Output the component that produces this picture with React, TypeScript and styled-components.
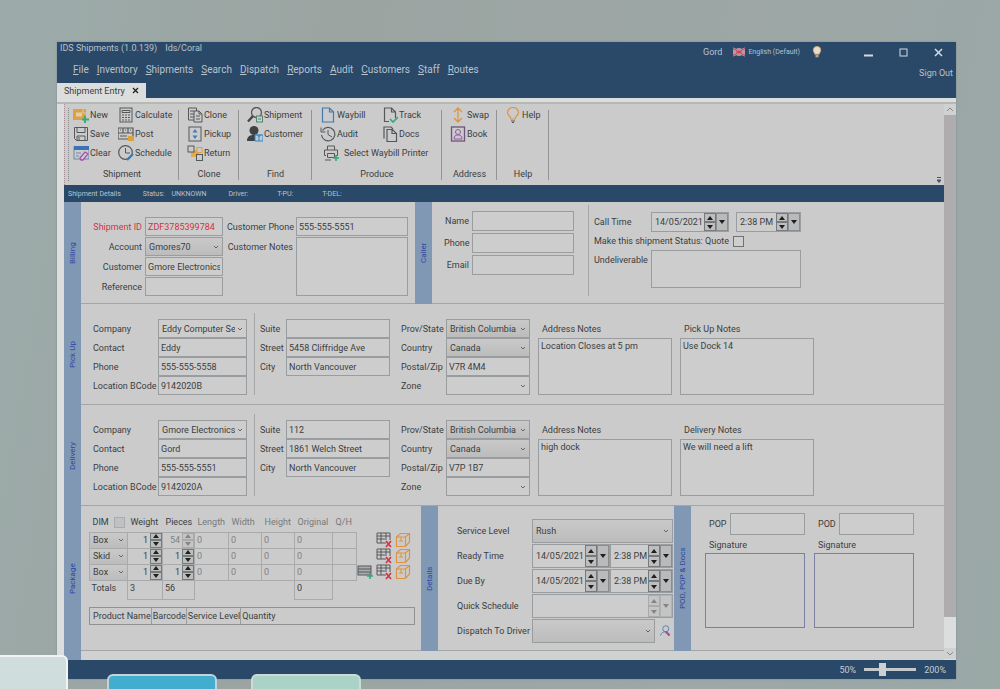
import React from "react";
import styled, { createGlobalStyle, css } from "styled-components";

const c = {
  navy: "#2a4868",
  grey: "#cbcbcb",
  light: "#dcdddd",
  line: "#a3a5a6",
  border: "#9a9d9f",
  strip: "#8198b4",
  stripText: "#2c46a0",
  text: "#3b3d40",
  red: "#d3333f",
};

const Global = createGlobalStyle`
  * { box-sizing: border-box; }
  body {
    margin: 0;
    font-family: Roboto, "Open Sans", sans-serif;
    font-size: 9px;
    line-height: 12px;
    color: ${c.text};
  }
  button, input, select, textarea { font: inherit; color: inherit; margin: 0; }
`;

const Page = styled.div`
  position: relative;
  min-height: 100vh;
  overflow: hidden;
  padding: 42px 44px 10px 57px;
  background: linear-gradient(100deg, #9cabaa 0%, #9ba4a1 30%, #9da7a6 70%, #9aa8a6 100%);
`;

const AppWindow = styled.div`
  background: ${c.light};
  box-shadow: 0 0 2px #7d8b8e;
`;

/* ---------- Title bar, menu and tabs ---------- */

const Header = styled.header`
  background: ${c.navy};
  color: #b9c3cd;
`;

const TitleBar = styled.div`
  display: flex;
  justify-content: space-between;
  height: 18px;
  padding-left: 3px;
`;

const Title = styled.h1`
  display: flex;
  gap: 8px;
  margin: 0;
  font-size: 9px;
  font-weight: 400;
`;

const TitleTools = styled.div`
  display: flex;
  align-items: center;
  gap: 11px;
  padding-top: 2px;
`;

const Language = styled.button`
  display: flex;
  align-items: center;
  gap: 3px;
  padding: 0;
  border: 0;
  background: none;
  font-size: 7px;
`;

const WindowButtons = styled.div`
  display: flex;
  margin-left: 17px;
`;

const WindowButton = styled.button`
  display: grid;
  place-items: center;
  width: 35px;
  height: 16px;
  padding: 0;
  border: 0;
  background: none;
`;

const MenuBar = styled.nav`
  display: flex;
  justify-content: space-between;
  align-items: center;
  height: 20px;
  padding: 0 3px 0 16px;
`;

const MenuItems = styled.div`
  display: flex;
  gap: 8px;
  font-size: 10px;
`;

const MenuLink = styled.a`
  color: inherit;
  text-decoration: none;
`;

const SignOut = styled(MenuLink)`
  padding-top: 6px;
`;

const Tabs = styled.div`
  display: flex;
  align-items: flex-end;
  height: 18px;
`;

const Tab = styled.div`
  display: flex;
  align-items: center;
  gap: 7px;
  height: 15px;
  padding: 0 7px;
  background: ${c.light};
  color: ${c.text};
`;

const CloseTab = styled.button`
  display: flex;
  padding: 0;
  border: 0;
  background: none;
`;

/* ---------- Body frame ---------- */

const Body = styled.div`
  display: flex;
  margin-top: 4px;
  border-top: 2px solid #b5b8b5;
`;

const Main = styled.main`
  flex: 1;
  min-width: 0;
  padding-left: 7px;
`;

const MainFoot = styled.div`
  height: 9px;
  border-left: 17px solid ${c.strip};
  background: #d0d1d1;
`;

const ScrollBar = styled.div`
  display: flex;
  flex-direction: column;
  width: 12px;
  padding-bottom: 1px;
`;

const ScrollButton = styled.button`
  display: grid;
  place-items: center;
  height: 11px;
  padding: 0;
  border: 0;
  background: #d0d1d1;
`;

const Thumb = styled.div`
  flex: 1;
  margin-bottom: 31px;
  background: #aeacad;
`;

/* ---------- Ribbon ---------- */

const Ribbon = styled.div`
  display: flex;
  height: 81px;
  padding: 1px 0 0 4px;
  background: ${c.grey};
  border-left: 1px dotted #a58f95;
`;

const Grip = styled.div`
  width: 2px;
  margin: 3px 0 4px -1px;
  border-left: 1px dotted #85888a;
`;

const RibbonGroup = styled.section<{ $w: number; $tight?: boolean }>`
  display: flex;
  flex-direction: column;
  justify-content: space-between;
  width: ${(p) => p.$w}px;
  height: 75px;
  padding-left: ${(p) => (p.$tight ? 3 : 8)}px;
  background: linear-gradient(#929496, #929496) right 5px / 1px 70px no-repeat;
`;

const Commands = styled.div<{ $cols?: string }>`
  display: grid;
  grid-template-columns: ${(p) => p.$cols || "auto"};
  grid-auto-rows: 19px;
  justify-content: start;
`;

const Command = styled.button<{ $wide?: boolean }>`
  display: flex;
  align-items: center;
  gap: 1px;
  padding: 0;
  border: 0;
  background: none;
  white-space: nowrap;
  ${(p) => p.$wide && css`grid-column: 1 / -1; padding-left: 3px; gap: 5px;`}
`;

const GroupName = styled.h2`
  margin: 0 8px 0 0;
  font-size: 9px;
  font-weight: 400;
  text-align: center;
`;

const RibbonEnd = styled.div`
  display: flex;
  align-items: flex-end;
  justify-content: flex-end;
  flex: 1;
  padding: 0 3px 2px 0;
`;

const DetailsBar = styled.div`
  display: flex;
  align-items: center;
  gap: 22px;
  height: 17px;
  padding-left: 4px;
  background: ${c.navy};
  color: #b9c3cd;
  font-size: 7px;
`;

/* ---------- Form sections ---------- */

const Section = styled.section`
  display: flex;
  border-bottom: 1px solid ${c.line};
  background: ${c.grey};
`;

const Strip = styled.h2`
  display: flex;
  align-items: center;
  justify-content: center;
  flex: none;
  width: 17px;
  margin: 0 0 -1px;
  background: ${c.strip};
  color: ${c.stripText};
  font-size: 8px;
  font-weight: 400;
  line-height: 17px;
  writing-mode: vertical-rl;
  white-space: nowrap;
  transform: rotate(180deg);
`;

const Panel = styled.div<{ $pad: string; $w?: number }>`
  display: flex;
  flex: ${(p) => (p.$w ? "none" : "1")};
  width: ${(p) => (p.$w ? p.$w + "px" : "auto")};
  min-width: 0;
  padding: ${(p) => p.$pad};
`;

const Fields = styled.div<{ $cols: string; $row: number; $gap?: string; $right?: boolean }>`
  display: grid;
  grid-template-columns: ${(p) => p.$cols};
  grid-auto-rows: ${(p) => p.$row}px;
  gap: ${(p) => p.$gap || "0"};
  align-content: start;
  text-align: ${(p) => (p.$right ? "right" : "left")};
`;

const Divider = styled.div`
  width: 1px;
  margin: -6px 5px 0 7px;
  background: ${c.line};
`;

const Label = styled.label<{ $red?: boolean; $top?: boolean }>`
  align-self: ${(p) => (p.$top ? "start" : "center")};
  padding-top: ${(p) => (p.$top ? "4px" : "0")};
  color: ${(p) => (p.$red ? c.red : "inherit")};
  white-space: nowrap;
`;

const box = css`
  min-width: 0;
  width: 100%;
  height: 100%;
  border: 1px solid ${c.border};
  border-radius: 0;
  background: #cdcdcd;
  outline: none;
`;

const Input = styled.input<{ $red?: boolean }>`
  ${box}
  padding: 0 2px;
  color: ${(p) => (p.$red ? c.red : "inherit")};
`;

const Area = styled.textarea<{ $rows?: number }>`
  ${box}
  display: block;
  padding: 1px 2px;
  resize: none;
  ${(p) => p.$rows && css`grid-row: span ${p.$rows};`}
`;

const SelectBox = styled.div<{ $flat?: boolean }>`
  display: grid;
  align-items: center;
  min-width: 0;
  height: 100%;
  border: 1px solid ${c.border};
  background: ${(p) => (p.$flat ? "#cdcdcd" : "linear-gradient(#c9c9c9, #bcbcbc)")};
  select, svg { grid-area: 1 / 1; }
  select {
    appearance: none;
    min-width: 0;
    width: 100%;
    height: 100%;
    padding: 0 11px 0 3px;
    border: 0;
    background: none;
    outline: none;
  }
  svg { justify-self: end; margin-right: 3px; pointer-events: none; }
`;

const Chevron = () => (
  <svg width="6" height="4" viewBox="0 0 6 4" fill="none" stroke="#666" strokeWidth="1">
    <path d="M1 1l2 2 2-2" />
  </svg>
);

const Select = ({ id, value, flat }: { id: string; value: string; flat?: boolean }) => (
  <SelectBox $flat={flat}>
    <select id={id} defaultValue={value} aria-label={id}>
      <option>{value}</option>
    </select>
    <Chevron />
  </SelectBox>
);

const TextField = ({ id, label, value = "", red }: { id: string; label: string; value?: string; red?: boolean }) => (
  <>
    <Label htmlFor={id} $red={red}>{label}</Label>
    <Input id={id} defaultValue={value} $red={red} />
  </>
);

const SelectField = ({ id, label, value, flat }: { id: string; label: string; value: string; flat?: boolean }) => (
  <>
    <Label htmlFor={id}>{label}</Label>
    <Select id={id} value={value} flat={flat} />
  </>
);

/* ---------- Spinners and date boxes ---------- */

const Spin = styled.span<{ $dim?: boolean }>`
  display: grid;
  grid-template-rows: 1fr 1fr;
  flex: none;
  width: 12px;
  height: 100%;
  opacity: ${(p) => (p.$dim ? 0.4 : 1)};
`;

const SpinButton = styled.button`
  display: grid;
  place-items: center;
  min-height: 0;
  padding: 0;
  border: 1px solid #77797b;
  background: #bdbebf;
  overflow: hidden;
`;

const Tri = ({ up }: { up?: boolean }) => (
  <svg width="6" height="4" viewBox="0 0 6 4" fill="#1f1f1f">
    <path d={up ? "M0 4L3 0l3 4z" : "M0 0h6L3 4z"} />
  </svg>
);

const Spinner = ({ dim }: { dim?: boolean }) => (
  <Spin $dim={dim}>
    <SpinButton aria-label="Increase"><Tri up /></SpinButton>
    <SpinButton aria-label="Decrease"><Tri /></SpinButton>
  </Spin>
);

const PickBox = styled.div<{ $w: number }>`
  display: flex;
  width: ${(p) => p.$w}px;
  height: 100%;
  border: 1px solid ${c.border};
  input {
    flex: 1;
    min-width: 0;
    padding: 0 0 0 3px;
    border: 0;
    background: #cdcdcd;
    outline: none;
  }
`;

const Drop = styled.button<{ $dim?: boolean }>`
  display: grid;
  place-items: center;
  flex: none;
  width: 12px;
  padding: 0;
  border: 1px solid #8b8d8f;
  background: #b9babb;
  opacity: ${(p) => (p.$dim ? 0.4 : 1)};
`;

const Picker = ({ id, value, w, dim }: { id: string; value: string; w: number; dim?: boolean }) => (
  <PickBox $w={w}>
    <input id={id} aria-label={id} defaultValue={value} />
    <Spinner dim={dim} />
    <Drop $dim={dim} aria-label="Open"><Tri /></Drop>
  </PickBox>
);

const Line = styled.div<{ $gap?: number }>`
  display: flex;
  align-items: center;
  gap: ${(p) => p.$gap || 0}px;
  height: 100%;
  min-width: 0;
`;

const Check = styled.input.attrs({ type: "checkbox" })`
  appearance: none;
  flex: none;
  width: 11px;
  height: 11px;
  border: 1px solid #6f7173;
  background: #cfcfcf;
  &:disabled { border-color: #a9abac; background: #c0c1c2; }
`;

const CallInfo = styled.div`
  display: grid;
  grid-template-columns: 57px 150px;
  grid-template-rows: 20px 18px 38px;
  align-content: start;
`;

const QuoteLine = styled.div`
  display: flex;
  align-items: center;
  gap: 4px;
  grid-column: 1 / -1;
`;

/* ---------- Packages ---------- */

const PackageTable = styled.table`
  table-layout: fixed;
  width: 326px;
  border-collapse: collapse;
  th {
    height: 19px;
    padding: 0 0 0 3px;
    font-weight: 400;
    text-align: left;
    white-space: nowrap;
    color: #77797b;
  }
  th:nth-child(-n + 3) { color: ${c.text}; }
  td { height: 16px; padding: 0; vertical-align: middle; }
`;

const Cell = styled.td<{ $open?: boolean; $tall?: boolean; $dim?: boolean }>`
  border: ${(p) => (p.$open ? "0" : "1px solid #a8aaab")};
  color: ${(p) => (p.$dim ? "#808284" : c.text)};
  && { ${(p) => p.$tall && css`height: 19px; padding: 1px 2px; vertical-align: top;`} }
`;

const DimHead = styled.span`
  display: flex;
  align-items: center;
  gap: 5px;
`;

const CellSelect = styled.div`
  height: 15px;
  > div { border: 0; }
`;

const CellInput = styled.div`
  display: flex;
  height: 15px;
  input {
    flex: 1;
    min-width: 0;
    width: 100%;
    padding: 0 2px;
    border: 0;
    background: none;
    text-align: right;
    outline: none;
  }
`;

const PlainInput = styled.input`
  display: block;
  width: 100%;
  height: 15px;
  padding: 0 2px;
  border: 0;
  background: none;
  outline: none;
`;

const RowTools = styled.div`
  display: flex;
  justify-content: flex-end;
  gap: 3px;
  padding-right: 5px;
`;

const ToolButton = styled.button`
  display: flex;
  align-items: center;
  padding: 0;
  border: 0;
  background: none;
`;

const PackagePanel = styled.div`
  flex: none;
  width: 340px;
  padding: 7px 0 24px 8px;
`;

const ProductTable = styled.table`
  width: 326px;
  height: 18px;
  margin-top: 7px;
  border: 1px solid #8f9193;
  border-spacing: 0;
  th {
    padding: 0 0 0 1px;
    border-right: 1px solid ${c.border};
    font-weight: 400;
    text-align: left;
    white-space: nowrap;
  }
  th:first-child { padding-left: 3px; }
  th:last-child { width: 100%; border: 0; }
`;

/* ---------- Signatures ---------- */

const Proof = styled.div`
  display: flex;
  flex-direction: column;
  width: 100px;
`;

const ProofLine = styled.div`
  display: grid;
  grid-template-columns: 21px 75px;
  align-items: center;
  height: 22px;
  margin-left: 4px;
`;

const SignTitle = styled.div`
  margin: 4px 0 2px 4px;
`;

const Canvas = styled.div`
  height: 75px;
  border: 1px solid #7c80a0;
`;

/* ---------- Status bar and foreground cards ---------- */

const StatusBar = styled.footer`
  display: flex;
  align-items: center;
  justify-content: flex-end;
  gap: 8px;
  height: 19px;
  padding-right: 10px;
  background: ${c.navy};
  color: #c5cdd5;
`;

const Zoom = styled.input.attrs({ type: "range" })`
  appearance: none;
  width: 52px;
  height: 13px;
  background: linear-gradient(#c3c8cd, #c3c8cd) center / 100% 3px no-repeat;
  &::-webkit-slider-thumb {
    appearance: none;
    width: 7px;
    height: 13px;
    background: #cdd0d3;
  }
`;

const Card = styled.div<{ $x: number; $w: number; $h: number; $bg: string; $edge: string }>`
  position: absolute;
  left: ${(p) => p.$x}px;
  bottom: -10px;
  width: ${(p) => p.$w}px;
  height: ${(p) => p.$h + 10}px;
  border: 2px solid ${(p) => p.$edge};
  border-radius: 6px;
  background: ${(p) => p.$bg};
`;

/* ---------- Icons ---------- */

const G = "#55585b";
const shapes: Record<string, React.ReactNode> = {
  new: (<><rect x="0" y="2" width="13" height="11" fill="#e0a040" /><rect x="3" y="5.500" width="6" height="4" fill="#dccfae" /><path d="M10 2v4h5" stroke="#cbcbcb" /><path d="M12 9v7M9 12.500h7" stroke="#36a877" strokeWidth="1.800" /></>),
  save: (<><path d="M1.500 1.500h13v13h-11l-2-2z" stroke={G} /><path d="M4 1.500v5h8v-5M4 14.500V10h8v4.500M6 11v3" stroke={G} /></>),
  clear: (<><rect x="1" y="2" width="15" height="12" stroke="#6c87a8" /><rect x="1" y="1" width="15" height="4" fill="#3e72b4" /><path d="M3 8h5M3 11h3" stroke="#6c87a8" /><path d="M7 13l5-6 3 2-5 6H8z" fill="#d8c4dc" stroke="#9a55ab" strokeWidth="1.300" /></>),
  calc: (<><rect x="2" y="1" width="12" height="14" stroke={G} /><path d="M4 3.500h8v2H4zM4 8h2M7 8h2M10 8h2M4 10.500h2M7 10.500h2M10 10.500h2M4 13h2M7 13h2M10 13h2" stroke={G} /></>),
  post: (<><path d="M0 2h15v11H0zM0 7h15M5 2v5M10 2v5M2 10h7M2 4h1M7 4h1M12 4h1" stroke={G} strokeWidth="1.200" /><rect x="10" y="10" width="6" height="5" fill="#dda23c" /></>),
  schedule: (<><circle cx="7.500" cy="7.500" r="6.800" stroke={G} strokeWidth="1.200" /><path d="M7.500 3v5H12" stroke={G} /><path d="M9 15l6-6" stroke="#347fb9" strokeWidth="2.400" /></>),
  clone: (<><path d="M1.500 1h8v12h-8zM3 4h4M3 7h4M3 10h4" stroke={G} /><path d="M7 4h5l3 3v8H7z" fill="#cbcbcb" stroke={G} /><path d="M9 9h4M9 12h4M12 4v3h3" stroke={G} /></>),
  pickup: (<><rect x="2" y="1" width="12" height="14" stroke={G} /><path d="M5.500 6.500L8 3l2.500 3.500zM5.500 9.500L8 13l2.500-3.500z" fill="#3a7fb8" /></>),
  ret: (<><path d="M4 5h8v7H4z" fill="#dfab4c" /><rect x="1" y="1" width="6" height="6" fill="#cbcbcb" stroke={G} /><rect x="10" y="2.500" width="5" height="5" fill="#cbcbcb" stroke="#dba03a" /><rect x="9.500" y="9.500" width="6" height="6" fill="#cbcbcb" stroke={G} /></>),
  find: (<><circle cx="9.500" cy="5.500" r="5" stroke={G} strokeWidth="1.300" /><path d="M6 9l-5 5.500" stroke="#44474a" strokeWidth="2.400" /><rect x="9.500" y="9" width="6" height="6" fill="#c8d2cc" stroke="#53836e" /><path d="M11 12h3" stroke="#53836e" /></>),
  customer: (<><circle cx="7" cy="4.500" r="4.500" fill="#3f4245" /><path d="M0 15c0-5 3-6 7-6s6 2 6 6z" fill="#3f4245" /><path d="M8 9h8v6H8zM12 8v7M9.500 8.500l2.500 2 2.500-2" fill="#b4cbdd" stroke="#3b86b8" /></>),
  waybill: (<path d="M2.500 1h7l4 4v10h-11zM9.500 1v4h4" stroke="#3c7cae" strokeWidth="1.200" />),
  audit: (<><path d="M2.500 4.500A6.700 6.700 0 1 1 1.500 9" stroke={G} strokeWidth="1.200" /><path d="M1 1.500v4.500h4.500M8 4v4.500l4 2.500" stroke={G} /></>),
  printer: (<><path d="M4.500 5V1h7v4M3 10.500H1.500V5h13v5.500H13M4.500 8.500h7v4h-7zM2 15h6" stroke={G} /><path d="M13 10v6M10 13h6" stroke="#36a877" strokeWidth="1.600" /></>),
  track: (<><path d="M7 14.500H2.500V1h7l4 4v6M9.500 1v4h4" stroke={G} strokeWidth="1.200" /><path d="M8 12l3 3 5-5" stroke="#36a877" strokeWidth="1.700" /></>),
  docs: (<path d="M2 12.500V1h7l2 2M5 3.500h5.500l4 4v8H5zM10 3.500v4h4" stroke={G} strokeWidth="1.200" />),
  swap: (<path d="M8 1v14M4 5l4-4 4 4M4 11l4 4 4-4" stroke="#dd9440" strokeWidth="1.300" />),
  book: (<><rect x="1.500" y="1" width="13" height="14" stroke="#6d5577" strokeWidth="1.300" /><circle cx="8" cy="6" r="2.500" stroke="#9a55ab" /><path d="M4 13c0-3 1.500-4 4-4s4 1 4 4z" stroke="#9a55ab" /></>),
  help: (<><path d="M6 12c0-3-3.500-3.500-3.500-6.500a5.500 5 0 0 1 11 0C13.500 8.500 10 9 10 12z" stroke="#dd9440" strokeWidth="1.200" /><path d="M6 14h4M7 15.500h2" stroke={G} /></>),
  addRow: (<><rect x="1" y="2" width="13" height="9" fill="#a9acae" stroke={G} /><path d="M1 5h13M1 8h13" stroke={G} /><path d="M13 9v6M10 12h6" stroke="#36a877" strokeWidth="1.600" /></>),
  delRow: (<><path d="M10 11H1V1h13v7M1 4h13M1 7h8M5 1v10M10 1v7" stroke={G} /><path d="M10 9l5 6M15 9l-5 6" stroke="#d03543" strokeWidth="1.700" /></>),
  cube: (<><path d="M1.500 5l4-3.500h9V10l-4 4.500h-9zM1.500 5h9l4-3.500M10.500 5v9.500" stroke="#dd9440" strokeWidth="1.200" /><path d="M4 9h4M6 5v4" stroke="#dd9440" /></>),
  driver: (<><circle cx="9" cy="5" r="4" stroke="#4f7fb0" strokeWidth="1.200" /><path d="M2 14c1-4 4-5 7-5s5 3 5 5" stroke="#4f7fb0" strokeWidth="1.200" /><path d="M9 9l5 5" stroke="#b5478a" strokeWidth="2.400" /></>),
  bulb: (<><path d="M5 11C5 9 3 8 3 5.500a5 5 0 0 1 10 0C13 8 11 9 11 11z" fill="#e6dccb" stroke="#d9a066" /><path d="M6 12h4v3H6z" fill="#b9a58c" /></>),
  flag: (<><rect y="3" width="16" height="10" fill="#54638f" /><path d="M0 3l16 10M16 3L0 13" stroke="#d7d3da" strokeWidth="2.500" /><path d="M8 3v10M0 8h16" stroke="#dbd7dc" strokeWidth="4" /><path d="M8 3v10M0 8h16M0 3l16 10M16 3L0 13" stroke="#c84859" strokeWidth="1.500" /></>),
};

const Icon = ({ name, size = 16 }: { name: string; size?: number }) => (
  <svg width={size} height={size} viewBox="0 0 16 16" fill="none" aria-hidden="true">
    {shapes[name]}
  </svg>
);

const Cmd = ({ icon, text, wide }: { icon: string; text: string; wide?: boolean }) => (
  <Command $wide={wide}>
    <Icon name={icon} />
    {text}
  </Command>
);

/* ---------- Address block shared by pick up and delivery ---------- */

type Stop = {
  key: string; strip: string; company: string; contact: string; phone: string; code: string;
  suite: string; street: string; postal: string; note: string; extraLabel: string; extra: string;
};

const NotesBlock = styled.div`
  display: grid;
  grid-template-columns: 134px 134px;
  grid-template-rows: 19px 57px;
  column-gap: 8px;
  margin-left: 8px;
  label { padding-left: 4px; }
`;

const AddressSection = ({ s }: { s: Stop }) => (
  <Section>
    <Strip>{s.strip}</Strip>
    <Panel $pad="15px 0 9px 12px">
      <Fields $cols="65px 89px" $row={19}>
        <SelectField id={s.key + "-company"} label="Company" value={s.company} flat />
        <TextField id={s.key + "-contact"} label="Contact" value={s.contact} />
        <TextField id={s.key + "-phone"} label="Phone" value={s.phone} />
        <TextField id={s.key + "-code"} label="Location BCode" value={s.code} />
      </Fields>
      <Divider />
      <Fields $cols="26px 104px" $row={19}>
        <TextField id={s.key + "-suite"} label="Suite" value={s.suite} />
        <TextField id={s.key + "-street"} label="Street" value={s.street} />
        <TextField id={s.key + "-city"} label="City" value="North Vancouver" />
      </Fields>
      <Panel $pad="0 0 0 11px">
        <Fields $cols="45px 84px" $row={19}>
          <SelectField id={s.key + "-prov"} label="Prov/State" value="British Columbia" />
          <SelectField id={s.key + "-country"} label="Country" value="Canada" />
          <TextField id={s.key + "-postal"} label="Postal/Zip" value={s.postal} />
          <SelectField id={s.key + "-zone"} label="Zone" value="" flat />
        </Fields>
        <NotesBlock>
          <Label htmlFor={s.key + "-note"}>Address Notes</Label>
          <Label htmlFor={s.key + "-extra"}>{s.extraLabel}</Label>
          <Area id={s.key + "-note"} defaultValue={s.note} />
          <Area id={s.key + "-extra"} defaultValue={s.extra} />
        </NotesBlock>
      </Panel>
    </Panel>
  </Section>
);

const stops: Stop[] = [
  { key: "pickup", strip: "Pick Up", company: "Eddy Computer Services", contact: "Eddy", phone: "555-555-5558", code: "9142020B", suite: "", street: "5458 Cliffridge Ave", postal: "V7R 4M4", note: "Location Closes at 5 pm", extraLabel: "Pick Up Notes", extra: "Use Dock 14" },
  { key: "delivery", strip: "Delivery", company: "Gmore Electronics", contact: "Gord", phone: "555-555-5551", code: "9142020A", suite: "112", street: "1861 Welch Street", postal: "V7P 1B7", note: "high dock", extraLabel: "Delivery Notes", extra: "We will need a lift" },
];

const packages = [
  { kind: "Box", weight: "1", pieces: "54", dim: true },
  { kind: "Skid", weight: "1", pieces: "1" },
  { kind: "Box", weight: "1", pieces: "1", add: true },
];

const menu = ["File", "Inventory", "Shipments", "Search", "Dispatch", "Reports", "Audit", "Customers", "Staff", "Routes"];
const dims = ["Length", "Width", "Height", "Original"];

export default function App() {
  return (
    <Page>
      <Global />
      <AppWindow>
        <Header>
          <TitleBar>
            <Title><span>IDS Shipments (1.0.139)</span><span>Ids/Coral</span></Title>
            <TitleTools>
              <span>Gord</span>
              <Language><Icon name="flag" size={12} />English (Default)</Language>
              <Icon name="bulb" size={12} />
              <WindowButtons>
                <WindowButton aria-label="Minimize">
                  <svg width="9" height="9"><path d="M0 7.500h9" stroke="#d5dade" strokeWidth="2" /></svg>
                </WindowButton>
                <WindowButton aria-label="Maximize">
                  <svg width="9" height="9"><rect x="1" y="1" width="7" height="7" fill="none" stroke="#d5dade" /></svg>
                </WindowButton>
                <WindowButton aria-label="Close">
                  <svg width="9" height="9"><path d="M1 1l7 7M8 1L1 8" stroke="#d5dade" strokeWidth="1.500" /></svg>
                </WindowButton>
              </WindowButtons>
            </TitleTools>
          </TitleBar>
          <MenuBar>
            <MenuItems>
              {menu.map((m) => <MenuLink key={m} href="#"><u>{m[0]}</u>{m.slice(1)}</MenuLink>)}
            </MenuItems>
            <SignOut href="#">Sign Out</SignOut>
          </MenuBar>
          <Tabs>
            <Tab>
              Shipment Entry
              <CloseTab aria-label="Close tab">
                <svg width="7" height="7"><path d="M1 1l5 5M6 1L1 6" stroke="#222" strokeWidth="1.300" /></svg>
              </CloseTab>
            </Tab>
          </Tabs>
        </Header>

        <Body>
          <Main>
            <Ribbon>
              <Grip />
              <RibbonGroup $w={109} $tight>
                <Commands $cols="45px auto">
                  <Cmd icon="new" text="New" />
                  <Cmd icon="calc" text="Calculate" />
                  <Cmd icon="save" text="Save" />
                  <Cmd icon="post" text="Post" />
                  <Cmd icon="clear" text="Clear" />
                  <Cmd icon="schedule" text="Schedule" />
                </Commands>
                <GroupName>Shipment</GroupName>
              </RibbonGroup>
              <RibbonGroup $w={60}>
                <Commands>
                  <Cmd icon="clone" text="Clone" />
                  <Cmd icon="pickup" text="Pickup" />
                  <Cmd icon="ret" text="Return" />
                </Commands>
                <GroupName>Clone</GroupName>
              </RibbonGroup>
              <RibbonGroup $w={73}>
                <Commands>
                  <Cmd icon="find" text="Shipment" />
                  <Cmd icon="customer" text="Customer" />
                </Commands>
                <GroupName>Find</GroupName>
              </RibbonGroup>
              <RibbonGroup $w={130}>
                <Commands $cols="62px auto">
                  <Cmd icon="waybill" text="Waybill" />
                  <Cmd icon="track" text="Track" />
                  <Cmd icon="audit" text="Audit" />
                  <Cmd icon="docs" text="Docs" />
                  <Cmd icon="printer" text="Select Waybill Printer" wide />
                </Commands>
                <GroupName>Produce</GroupName>
              </RibbonGroup>
              <RibbonGroup $w={55}>
                <Commands>
                  <Cmd icon="swap" text="Swap" />
                  <Cmd icon="book" text="Book" />
                </Commands>
                <GroupName>Address</GroupName>
              </RibbonGroup>
              <RibbonGroup $w={52}>
                <Commands>
                  <Cmd icon="help" text="Help" />
                </Commands>
                <GroupName>Help</GroupName>
              </RibbonGroup>
              <RibbonEnd>
                <svg width="4" height="6"><path d="M0 .5h4M0 3h4L2 5.500z" stroke="#4b5070" fill="#4b5070" /></svg>
              </RibbonEnd>
            </Ribbon>

            <DetailsBar>
              <span>Shipment Details</span>
              <Line $gap={7}><span>Status:</span><span>UNKNOWN</span></Line>
              <Line $gap={29}><span>Driver:</span><span>T-PU:</span><span>T-DEL:</span></Line>
            </DetailsBar>

            <Section>
              <Strip>Billing</Strip>
              <Panel $pad="15px 0 7px 3px" $w={334}>
                <Fields $cols="58px 78px" $row={19} $gap="1px 3px" $right>
                  <TextField id="shipment-id" label="Shipment ID" value="ZDF3785399784" red />
                  <SelectField id="account" label="Account" value="Gmores70" />
                  <TextField id="customer" label="Customer" value="Gmore Electronics" />
                  <TextField id="reference" label="Reference" />
                </Fields>
                <Panel $pad="0 0 0 4px">
                  <Fields $cols="66px 112px" $row={19} $gap="1px 3px" $right>
                    <TextField id="cust-phone" label="Customer Phone" value="555-555-5551" />
                    <Label htmlFor="cust-notes">Customer Notes</Label>
                    <Area id="cust-notes" $rows={3} />
                  </Fields>
                </Panel>
              </Panel>
              <Strip>Caller</Strip>
              <Panel $pad="9px 0 7px 12px">
                <Fields $cols="25px 102px" $row={20} $gap="2px 3px" $right>
                  <TextField id="caller-name" label="Name" />
                  <TextField id="caller-phone" label="Phone" />
                  <TextField id="caller-email" label="Email" />
                </Fields>
                <Panel $pad="0 0 0 7px">
                  <Divider />
                  <Panel $pad="1px 0 0 0">
                    <CallInfo>
                      <Label htmlFor="call-date">Call Time</Label>
                      <Line $gap={7}>
                        <Picker id="call-date" value="14/05/2021" w={78} />
                        <Picker id="call-hour" value="2:38 PM" w={65} />
                      </Line>
                      <QuoteLine>
                        <Label htmlFor="quote">Make this shipment Status: Quote</Label>
                        <Check id="quote" />
                      </QuoteLine>
                      <Label htmlFor="undeliverable" $top>Undeliverable</Label>
                      <Area id="undeliverable" />
                    </CallInfo>
                  </Panel>
                </Panel>
              </Panel>
            </Section>

            {stops.map((s) => <AddressSection key={s.key} s={s} />)}

            <Section>
              <Strip>Package</Strip>
              <PackagePanel>
                <PackageTable>
                  <colgroup>
                    {[38, 35, 32, 34, 33, 33, 38, 24, 59].map((w, i) => <col key={i} width={w} />)}
                  </colgroup>
                  <thead>
                    <tr>
                      <th><DimHead>DIM <Check disabled aria-label="Use dimensions" /></DimHead></th>
                      <th>Weight</th>
                      <th>Pieces</th>
                      {dims.map((d) => <th key={d}>{d}</th>)}
                      <th>Q/H</th>
                      <th aria-label="Actions" />
                    </tr>
                  </thead>
                  <tbody>
                    {packages.map((p, i) => (
                      <tr key={i}>
                        <Cell><CellSelect><Select id={"package-type-" + i} value={p.kind} /></CellSelect></Cell>
                        <Cell><CellInput><input aria-label="Weight" defaultValue={p.weight} /><Spinner /></CellInput></Cell>
                        <Cell $dim={p.dim}><CellInput><input aria-label="Pieces" defaultValue={p.pieces} /><Spinner dim={p.dim} /></CellInput></Cell>
                        {dims.map((d) => <Cell key={d} $dim><PlainInput aria-label={d} defaultValue="0" /></Cell>)}
                        <Cell />
                        <Cell $open>
                          <RowTools>
                            {p.add && <ToolButton aria-label="Add row"><Icon name="addRow" /></ToolButton>}
                            <ToolButton aria-label="Delete row"><Icon name="delRow" /></ToolButton>
                            <ToolButton aria-label="Package details"><Icon name="cube" /></ToolButton>
                          </RowTools>
                        </Cell>
                      </tr>
                    ))}
                    <tr>
                      <Cell $open $tall>Totals</Cell>
                      <Cell $tall>3</Cell>
                      <Cell $tall>56</Cell>
                      <Cell $open colSpan={3} />
                      <Cell $tall>0</Cell>
                      <Cell $open colSpan={2} />
                    </tr>
                  </tbody>
                </PackageTable>
                <ProductTable>
                  <thead>
                    <tr><th>Product Name</th><th>Barcode</th><th>Service Level</th><th>Quantity</th></tr>
                  </thead>
                </ProductTable>
              </PackagePanel>
              <Strip>Details</Strip>
              <Panel $pad="13px 0 7px 19px" $w={236}>
                <Fields $cols="75px 141px" $row={24} $gap="1px 0">
                  <SelectField id="service" label="Service Level" value="Rush" />
                  <Label htmlFor="ready-date">Ready Time</Label>
                  <Line><Picker id="ready-date" value="14/05/2021" w={78} /><Picker id="ready-hour" value="2:38 PM" w={63} /></Line>
                  <Label htmlFor="due-date">Due By</Label>
                  <Line><Picker id="due-date" value="14/05/2021" w={78} /><Picker id="due-hour" value="2:38 PM" w={63} /></Line>
                  <Label htmlFor="quick">Quick Schedule</Label>
                  <Picker id="quick" value="" w={141} dim />
                  <Label htmlFor="driver">Dispatch To Driver</Label>
                  <Fields $cols="123px 12px" $row={24} $gap="0 4px">
                    <Select id="driver" value="" />
                    <ToolButton aria-label="Find driver"><Icon name="driver" size={12} /></ToolButton>
                  </Fields>
                </Fields>
              </Panel>
              <Strip>POD, POP &amp; Docs</Strip>
              <Panel $pad="7px 0 0 14px">
                <Fields $cols="100px 100px" $row={124} $gap="0 9px">
                  {["POP", "POD"].map((n) => (
                    <Proof key={n}>
                      <ProofLine><Label htmlFor={n}>{n}</Label><Input id={n} /></ProofLine>
                      <SignTitle>Signature</SignTitle>
                      <Canvas />
                    </Proof>
                  ))}
                </Fields>
              </Panel>
            </Section>
            <MainFoot />
          </Main>
          <ScrollBar>
            <ScrollButton aria-label="Scroll up">
              <svg width="8" height="5"><path d="M1 4l3-3 3 3" fill="none" stroke="#888" /></svg>
            </ScrollButton>
            <Thumb />
            <ScrollButton aria-label="Scroll down">
              <svg width="8" height="5"><path d="M1 1l3 3 3-3" fill="none" stroke="#888" /></svg>
            </ScrollButton>
          </ScrollBar>
        </Body>

        <StatusBar>
          <label htmlFor="zoom">50%</label>
          <Zoom id="zoom" min={50} max={200} defaultValue={100} />
          <span>200%</span>
        </StatusBar>
      </AppWindow>

      <Card $x={-10} $w={78} $h={34} $bg="#cfdedd" $edge="#f2f4f4" />
      <Card $x={107} $w={110} $h={15} $bg="#43add0" $edge="#c4d3da" />
      <Card $x={251} $w={110} $h={15} $bg="#aad2c6" $edge="#cbdcd8" />
    </Page>
  );
}
